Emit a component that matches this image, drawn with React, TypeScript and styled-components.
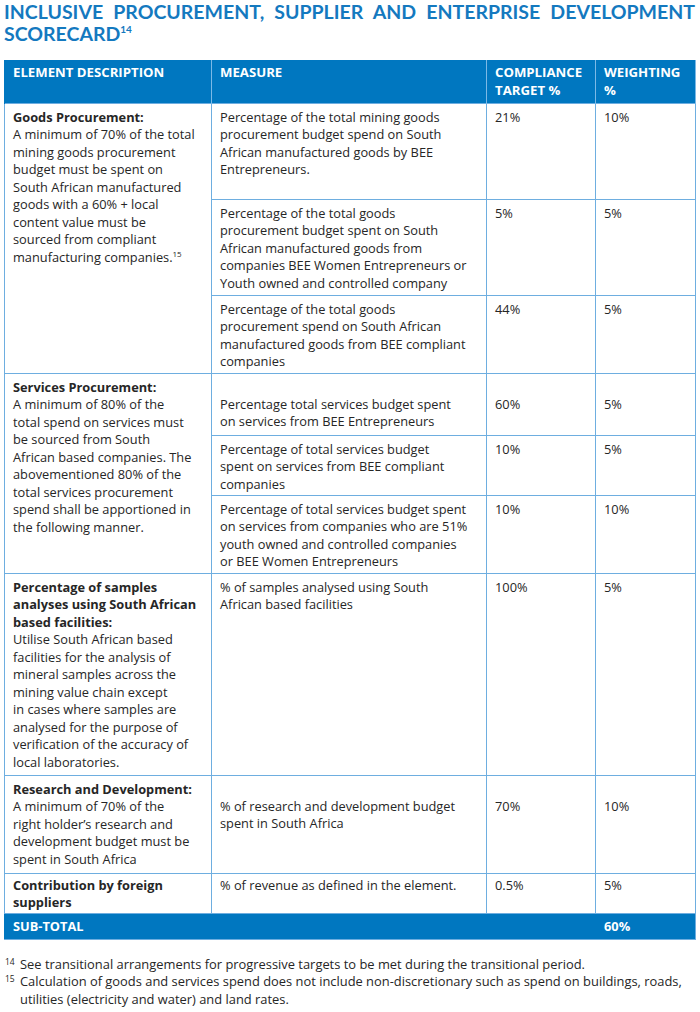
import React from "react";
import styled, { createGlobalStyle } from "styled-components";

const GlobalStyle = createGlobalStyle`
  html, body {
    margin: 0;
    padding: 0;
    background: #ffffff;
  }
  body {
    font-family: "Open Sans", Lato, Arial, sans-serif;
    color: #262626;
  }
`;

const Page = styled.div`
  width: 700px;
  padding: 0 5px 0 4px;
  box-sizing: border-box;
`;

const Title = styled.h1`
  margin: 0;
  padding-top: 1px;
  font-family: Lato, "Open Sans", sans-serif;
  font-size: 19.5px;
  line-height: 22px;
  font-weight: 700;
  color: #1479bf;
  text-transform: uppercase;
  sup {
    font-size: 10px;
    vertical-align: 8px;
    line-height: 0;
  }
`;

const TitleLine = styled.span<{ $spread?: boolean }>`
  display: block;
  text-align: ${(p) => (p.$spread ? "justify" : "left")};
  text-align-last: ${(p) => (p.$spread ? "justify" : "left")};
`;

const Table = styled.table`
  margin-top: 15px;
  width: 691px;
  border-collapse: collapse;
  table-layout: fixed;
  font-size: 12.8px;
  line-height: 17.5px;
`;

const HeadCell = styled.th<{ $w: number }>`
  width: ${(p) => p.$w}px;
  height: 43px;
  box-sizing: border-box;
  background: #0077c0;
  color: #ffffff;
  font-weight: 700;
  font-size: 13.2px;
  text-align: left;
  vertical-align: top;
  padding: 4px 8px 0;
  border-left: 1px solid #7cb9e6;
  border-right: 1px solid #7cb9e6;
  &:first-child {
    border-left-color: #0077c0;
  }
`;

const Row = styled.tr<{ $h: number }>`
  height: ${(p) => p.$h}px;
`;

const Cell = styled.td<{ $top?: number }>`
  vertical-align: top;
  padding: ${(p) => p.$top ?? 5}px 8px 0;
  border: 1px solid #6eaee0;
  box-sizing: border-box;
  sup {
    font-size: 8px;
    vertical-align: 5px;
    line-height: 0;
  }
`;

const Line = styled.span<{ $bold?: boolean }>`
  display: block;
  white-space: nowrap;
  font-weight: ${(p) => (p.$bold ? 700 : 400)};
`;

const TotalRow = styled.tr`
  height: 26px;
  background: #0077c0;
  color: #ffffff;
  font-weight: 700;
`;

const TotalCell = styled.td`
  padding: 4px 8px 0;
  vertical-align: top;
  border: 1px solid #6eaee0;
  border-left-color: #0077c0;
  &:first-child {
    border-right-color: #0077c0;
  }
`;

const Notes = styled.div`
  margin-top: 16px;
  font-size: 12.9px;
  line-height: 17.5px;
  color: #262626;
`;

const Note = styled.div`
  display: grid;
  grid-template-columns: 15px 1fr;
  padding-left: 1px;
`;

const NoteMark = styled.span`
  font-size: 8.5px;
  line-height: 12px;
`;

type Measure = { lines: string[]; target: string; weight: string; h: number; top?: number };

type Group = {
  bold: string[];
  body: string[];
  note?: string;
  top?: number;
  measures: Measure[];
};

const groups: Group[] = [
  {
    bold: ["Goods Procurement:"],
    body: [
      "A minimum of 70% of the total",
      "mining goods procurement",
      "budget must be spent on",
      "South African manufactured",
      "goods with a 60% + local",
      "content value must be",
      "sourced from compliant",
      "manufacturing companies.",
    ],
    note: "15",
    measures: [
      {
        lines: [
          "Percentage of the total mining goods",
          "procurement budget spend on South",
          "African manufactured goods by BEE",
          "Entrepreneurs.",
        ],
        target: "21%",
        weight: "10%",
        h: 96,
      },
      {
        lines: [
          "Percentage of the total goods",
          "procurement budget spent on South",
          "African manufactured goods from",
          "companies BEE Women Entrepreneurs or",
          "Youth owned and controlled company",
        ],
        target: "5%",
        weight: "5%",
        h: 96,
      },
      {
        lines: [
          "Percentage of the total goods",
          "procurement spend on South African",
          "manufactured goods from BEE compliant",
          "companies",
        ],
        target: "44%",
        weight: "5%",
        h: 78,
      },
    ],
  },
  {
    bold: ["Services Procurement:"],
    body: [
      "A minimum of 80% of the",
      "total spend on services must",
      "be sourced from South",
      "African based companies. The",
      "abovementioned 80% of the",
      "total services procurement",
      "spend shall be apportioned in",
      "the following manner.",
    ],
    measures: [
      {
        lines: ["Percentage total services budget spent", "on services from BEE Entrepreneurs"],
        target: "60%",
        weight: "5%",
        h: 62,
        top: 22,
      },
      {
        lines: [
          "Percentage of total services budget",
          "spent on services from BEE compliant",
          "companies",
        ],
        target: "10%",
        weight: "5%",
        h: 60,
      },
      {
        lines: [
          "Percentage of total services budget spent",
          "on services from companies who are 51%",
          "youth owned and controlled companies",
          "or BEE Women Entrepreneurs",
        ],
        target: "10%",
        weight: "10%",
        h: 78,
      },
    ],
  },
  {
    bold: ["Percentage of samples", "analyses using South African", "based facilities:"],
    body: [
      "Utilise South African based",
      "facilities for the analysis of",
      "mineral samples across the",
      "mining value chain except",
      "in cases where samples are",
      "analysed for the purpose of",
      "verification of the accuracy of",
      "local laboratories.",
    ],
    measures: [
      {
        lines: ["% of samples analysed using South", "African based facilities"],
        target: "100%",
        weight: "5%",
        h: 202,
      },
    ],
  },
  {
    bold: ["Research and Development:"],
    body: [
      "A minimum of 70% of the",
      "right holder’s research and",
      "development budget must be",
      "spent in South Africa",
    ],
    measures: [
      {
        lines: ["% of research and development budget", "spent in South Africa"],
        target: "70%",
        weight: "10%",
        h: 98,
        top: 22,
      },
    ],
  },
  {
    bold: ["Contribution by foreign", "suppliers"],
    body: [],
    top: 3,
    measures: [
      {
        lines: ["% of revenue as defined in the element."],
        target: "0.5%",
        weight: "5%",
        h: 40,
        top: 3,
      },
    ],
  },
];

const App: React.FC = () => {
  return (
    <Page>
      <GlobalStyle />
      <Title>
        <TitleLine $spread>Inclusive Procurement, Supplier and Enterprise Development</TitleLine>
        <TitleLine>
          Scorecard<sup>14</sup>
        </TitleLine>
      </Title>
      <Table>
        <thead>
          <tr>
            <HeadCell $w={207}>ELEMENT DESCRIPTION</HeadCell>
            <HeadCell $w={275}>MEASURE</HeadCell>
            <HeadCell $w={109}>COMPLIANCE TARGET %</HeadCell>
            <HeadCell $w={100}>WEIGHTING %</HeadCell>
          </tr>
        </thead>
        <tbody>
          {groups.map((g) =>
            g.measures.map((m, i) => (
              <Row key={g.bold[0] + i} $h={m.h}>
                {i === 0 && (
                  <Cell rowSpan={g.measures.length} $top={g.top}>
                    {g.bold.map((l) => (
                      <Line key={l} $bold>
                        {l}
                      </Line>
                    ))}
                    {g.body.map((l, j) => (
                      <Line key={l}>
                        {l}
                        {g.note && j === g.body.length - 1 && <sup>{g.note}</sup>}
                      </Line>
                    ))}
                  </Cell>
                )}
                <Cell $top={m.top}>
                  {m.lines.map((l) => (
                    <Line key={l}>{l}</Line>
                  ))}
                </Cell>
                <Cell $top={m.top}>{m.target}</Cell>
                <Cell $top={m.top}>{m.weight}</Cell>
              </Row>
            ))
          )}
          <TotalRow>
            <TotalCell colSpan={3}>SUB-TOTAL</TotalCell>
            <TotalCell>60%</TotalCell>
          </TotalRow>
        </tbody>
      </Table>
      <Notes>
        <Note>
          <NoteMark>14</NoteMark>
          <Line>See transitional arrangements for progressive targets to be met during the transitional period.</Line>
        </Note>
        <Note>
          <NoteMark>15</NoteMark>
          <div>
            <Line>
              Calculation of goods and services spend does not include non-discretionary such as
              spend on buildings, roads,
            </Line>
            <Line>utilities (electricity and water) and land rates.</Line>
          </div>
        </Note>
      </Notes>
    </Page>
  );
};

export default App;
